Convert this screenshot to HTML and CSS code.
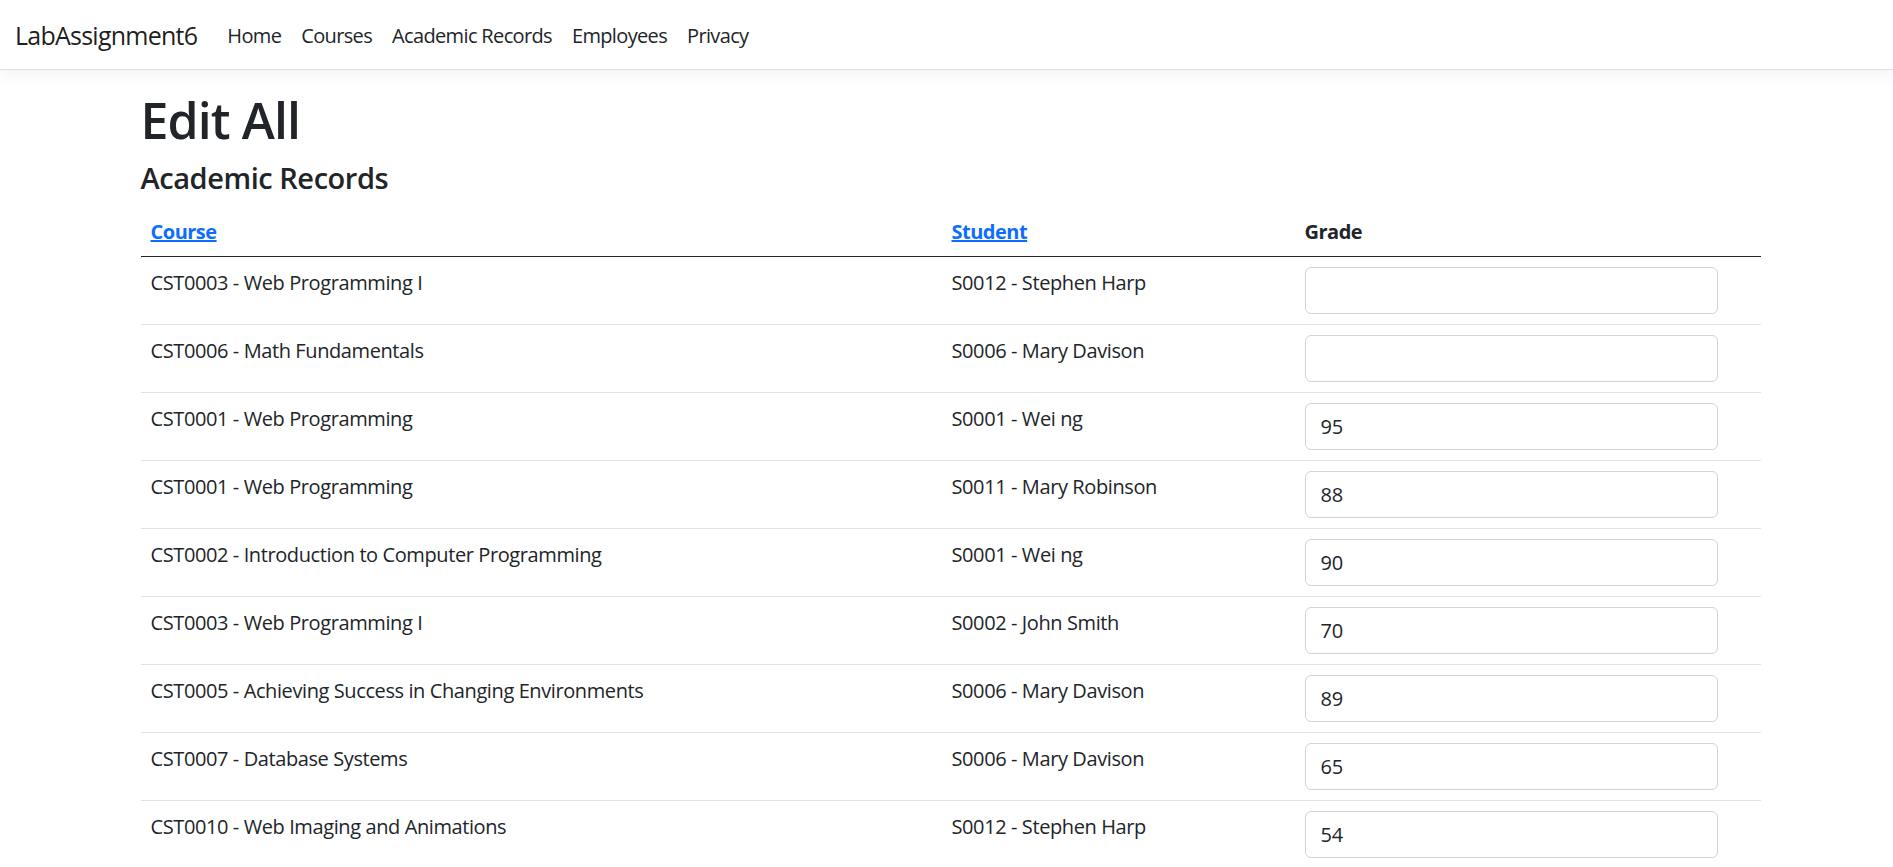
FILE: index.html
```html
<!DOCTYPE html>
<html lang="en">
<head>
<meta charset="utf-8">
<title>Edit All - LabAssignment6</title>
<link rel="stylesheet" href="styles.css">
</head>
<body>
<header>
  <nav class="navbar">
    <a class="brand" href="#">LabAssignment6</a>
    <ul class="nav">
      <li><a class="nav-link" href="#">Home</a></li>
      <li><a class="nav-link" href="#">Courses</a></li>
      <li><a class="nav-link" href="#">Academic Records</a></li>
      <li><a class="nav-link" href="#">Employees</a></li>
      <li><a class="nav-link" href="#">Privacy</a></li>
    </ul>
  </nav>
</header>
<main class="container">
  <h1 class="title">Edit All</h1>
  <h4 class="subtitle">Academic Records</h4>
  <table class="table">
    <colgroup>
      <col class="col-course">
      <col class="col-student">
      <col class="col-grade">
    </colgroup>
    <thead>
      <tr>
        <th><a href="#">Course</a></th>
        <th><a href="#">Student</a></th>
        <th>Grade</th>
      </tr>
    </thead>
    <tbody>
      <tr><td class="cell-text">CST0003 - Web Programming I</td><td class="cell-text">S0012 - Stephen Harp</td><td class="cell-input"><input class="form-control" type="text" value=""></td></tr>
      <tr><td class="cell-text">CST0006 - Math Fundamentals</td><td class="cell-text">S0006 - Mary Davison</td><td class="cell-input"><input class="form-control" type="text" value=""></td></tr>
      <tr><td class="cell-text">CST0001 - Web Programming</td><td class="cell-text">S0001 - Wei ng</td><td class="cell-input"><input class="form-control" type="text" value="95"></td></tr>
      <tr><td class="cell-text">CST0001 - Web Programming</td><td class="cell-text">S0011 - Mary Robinson</td><td class="cell-input"><input class="form-control" type="text" value="88"></td></tr>
      <tr><td class="cell-text">CST0002 - Introduction to Computer Programming</td><td class="cell-text">S0001 - Wei ng</td><td class="cell-input"><input class="form-control" type="text" value="90"></td></tr>
      <tr><td class="cell-text">CST0003 - Web Programming I</td><td class="cell-text">S0002 - John Smith</td><td class="cell-input"><input class="form-control" type="text" value="70"></td></tr>
      <tr><td class="cell-text">CST0005 - Achieving Success in Changing Environments</td><td class="cell-text">S0006 - Mary Davison</td><td class="cell-input"><input class="form-control" type="text" value="89"></td></tr>
      <tr><td class="cell-text">CST0007 - Database Systems</td><td class="cell-text">S0006 - Mary Davison</td><td class="cell-input"><input class="form-control" type="text" value="65"></td></tr>
      <tr><td class="cell-text">CST0010 - Web Imaging and Animations</td><td class="cell-text">S0012 - Stephen Harp</td><td class="cell-input"><input class="form-control" type="text" value="54"></td></tr>
    </tbody>
  </table>
</main>
</body>
</html>
```

FILE: styles.css
```css
* { box-sizing: border-box; }

html, body {
  margin: 0;
  padding: 0;
  background: #fff;
}

body {
  font-family: "Open Sans", "Noto Sans", sans-serif;
  font-size: 20px;
  line-height: 30px;
  color: #212529;
  letter-spacing: -0.4px;
}

.navbar {
  display: flex;
  align-items: center;
  height: 70px;
  padding: 2px 15px 0 15px;
  background: #fff;
  border-bottom: 1px solid #dfdfe8;
  box-shadow: 0 5px 15px rgba(0, 0, 0, 0.05);
  margin-bottom: 20px;
}

.brand {
  font-size: 25px;
  line-height: 37px;
  letter-spacing: -0.75px;
  color: rgba(0, 0, 0, 0.9);
  text-decoration: none;
  margin-right: 20px;
}

.nav {
  display: flex;
  list-style: none;
  margin: 0;
  padding: 0;
}

.nav-link {
  display: block;
  padding: 10px;
  color: #212529;
  text-decoration: none;
  font-size: 20px;
  line-height: 30px;
  letter-spacing: -0.65px;
}

.container {
  width: 1620px;
  margin: 0 auto;
  padding-left: 4px;
}

.title {
  font-size: 50px;
  font-weight: 600;
  line-height: 60px;
  letter-spacing: -0.9px;
  margin: 0 0 10px 0;
}

.subtitle {
  font-size: 29px;
  font-weight: 600;
  line-height: 36px;
  letter-spacing: -0.45px;
  margin: 2px 0 10px 0;
}

.table {
  width: 1620px;
  border-collapse: collapse;
  table-layout: fixed;
}

.col-course { width: 801px; }
.col-student { width: 353px; }
.col-grade { width: 466px; }

.table th {
  text-align: left;
  font-weight: 700;
  padding: 11px 10px 9px 10px;
  line-height: 30px;
  letter-spacing: -0.5px;
  border-bottom: 1px solid #212529;
}

.table th a {
  color: #0d6efd;
  text-decoration: underline;
}

.table td {
  vertical-align: top;
  border-bottom: 1px solid #dee2e6;
}

.cell-text {
  padding: 11px 10px 9px 10px;
}

.cell-input {
  padding: 10px;
}

.form-control {
  display: block;
  width: 413px;
  height: 47px;
  padding: 0 15px;
  font-family: inherit;
  font-size: 20px;
  letter-spacing: -0.3px;
  color: #212529;
  background: #fff;
  border: 1px solid #ced4da;
  border-radius: 6px;
  outline: none;
}
```
